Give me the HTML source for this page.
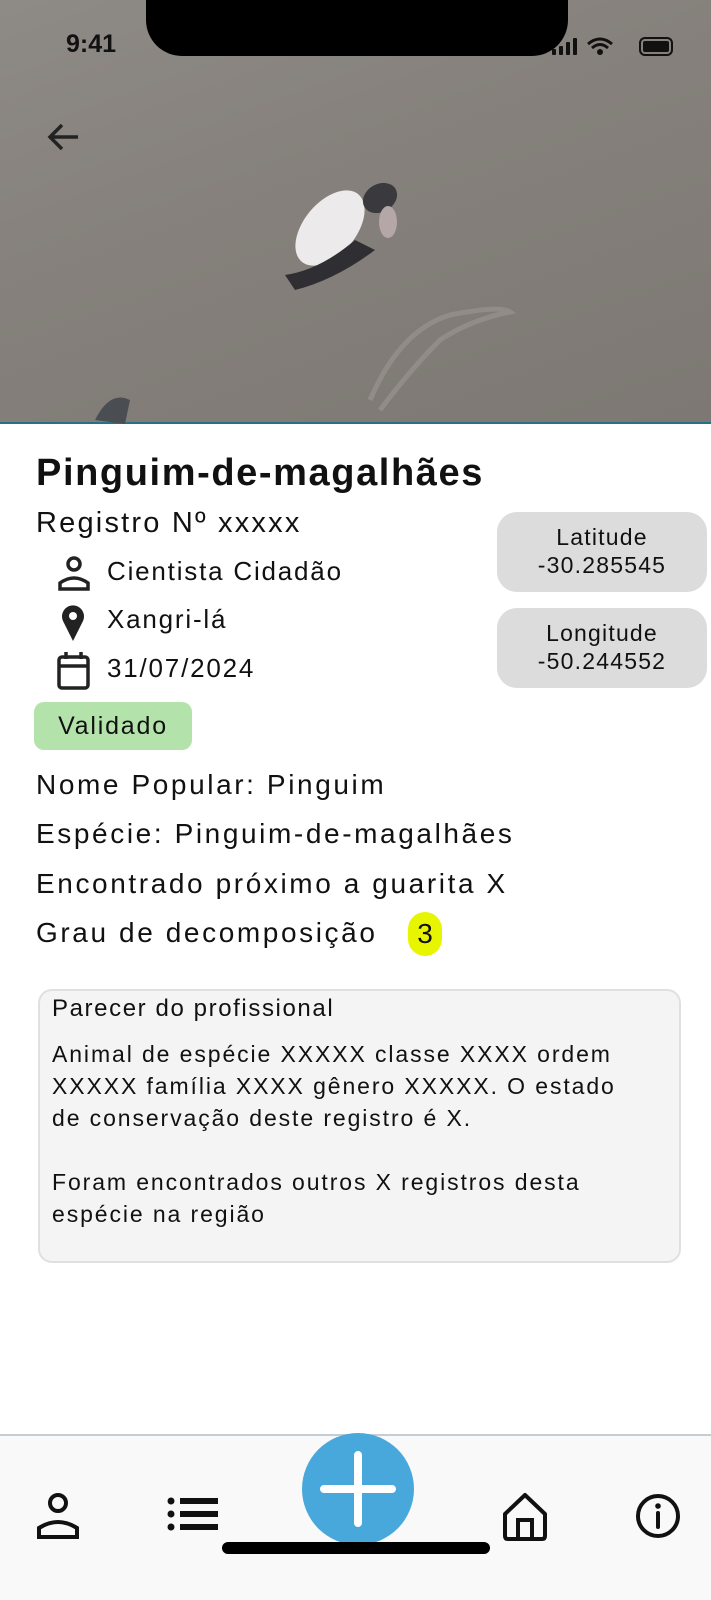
<!DOCTYPE html>
<html><head><meta charset="utf-8"><style>
*{margin:0;padding:0;box-sizing:border-box}
body{width:711px;height:1600px;position:relative;background:#fff;font-family:"Liberation Sans",sans-serif;color:#111;overflow:hidden}
.a{position:absolute}
.photo{left:0;top:0;width:711px;height:424px;background:linear-gradient(160deg,#8e8a86 0%,#86817c 40%,#7d7873 100%);border-bottom:2px solid #2a6f86}
.t{white-space:nowrap}
.box{background:#dcdcdc;border-radius:20px;text-align:center;font-size:23px;line-height:28px;padding-top:11px;letter-spacing:1.2px}
.ln{font-size:28px;line-height:34px;letter-spacing:2.6px}
</style></head><body>
<div class="a photo">
<svg width="711" height="424" class="a" style="left:0;top:0">
<path d="M370 400 Q400 330 450 315 Q500 305 510 312 Q470 320 440 340 Q410 370 380 410" stroke="#9d9892" stroke-width="5" fill="none" opacity=".6"/>
<ellipse cx="330" cy="228" rx="44" ry="26" transform="rotate(-50 330 228)" fill="#eceaea"/>
<ellipse cx="380" cy="198" rx="18" ry="14" transform="rotate(-30 380 198)" fill="#3a3a3e"/>
<path d="M285 275 Q320 270 355 240 L375 250 Q335 280 295 290 Z" fill="#2e2e33"/>
<ellipse cx="388" cy="222" rx="9" ry="16" fill="#b5a6a8"/>
<path d="M95 420 Q110 390 130 400 L125 424 Z" fill="#4a4e52"/>
</svg>
<div class="a t" style="left:66px;top:30px;font-size:25px;font-weight:bold;color:#111">9:41</div>
<div class="a" style="left:146px;top:-2px;width:422px;height:58px;background:#000;border-radius:0 0 36px 36px"></div>
<svg class="a" style="left:552px;top:36px" width="135" height="22"><g fill="#111"><rect x="0" y="13" width="4" height="6" rx="1"/><rect x="7" y="10" width="4" height="9" rx="1"/><rect x="14" y="6" width="4" height="13" rx="1"/><rect x="21" y="2" width="4" height="17" rx="1"/></g>
<path d="M36 8 Q48 -2 60 8 M40 12 Q48 5 56 12" stroke="#111" stroke-width="3" fill="none"/><circle cx="48" cy="16" r="3" fill="#111"/>
<rect x="88" y="2" width="32" height="17" rx="5" fill="none" stroke="#111" stroke-width="2"/><rect x="91" y="5" width="26" height="11" rx="2" fill="#111"/></svg>
<svg class="a" style="left:44px;top:120px" width="40" height="34"><path d="M34 17 H6 M18 5 L6 17 L18 29" stroke="#222" stroke-width="3.5" fill="none"/></svg>
</div>
<div class="a t" style="left:36px;top:452px;font-size:38px;font-weight:bold;letter-spacing:1.6px">Pinguim-de-magalhães</div>
<div class="a t" style="left:36px;top:507px;font-size:29px;letter-spacing:2.2px">Registro Nº xxxxx</div>
<svg class="a" style="left:56px;top:555px" width="36" height="36"><circle cx="18" cy="9" r="6" fill="none" stroke="#222" stroke-width="3.5"/><path d="M4 34 V28 Q18 18 32 28 V34 Z" fill="none" stroke="#222" stroke-width="3.5"/></svg>
<div class="a t" style="left:107px;top:556px;font-size:26px;letter-spacing:1.8px">Cientista Cidadão</div>
<svg class="a" style="left:60px;top:603px" width="30" height="40"><path d="M13 38 L3 18 A11 11 0 1 1 23 18 Z" fill="#222"/><circle cx="13" cy="13" r="4" fill="#fff"/></svg>
<div class="a t" style="left:107px;top:604px;font-size:26px;letter-spacing:1.8px">Xangri-lá</div>
<svg class="a" style="left:56px;top:650px" width="36" height="40"><rect x="3" y="7" width="29" height="31" rx="3" fill="none" stroke="#222" stroke-width="3.5"/><path d="M3 16 H32 M10 2 V9 M25 2 V9" stroke="#222" stroke-width="3.5"/></svg>
<div class="a t" style="left:107px;top:653px;font-size:26px;letter-spacing:1.8px">31/07/2024</div>
<div class="a box" style="left:497px;top:512px;width:210px;height:80px">Latitude<br>-30.285545</div>
<div class="a box" style="left:497px;top:608px;width:210px;height:80px">Longitude<br>-50.244552</div>
<div class="a t" style="left:34px;top:702px;width:158px;height:48px;background:#b3e3ab;border-radius:10px;font-size:25px;line-height:48px;text-align:center;letter-spacing:1.8px">Validado</div>
<div class="a t ln" style="left:36px;top:768px">Nome Popular: Pinguim</div>
<div class="a t ln" style="left:36px;top:817px">Espécie: Pinguim-de-magalhães</div>
<div class="a t ln" style="left:36px;top:867px">Encontrado próximo a guarita X</div>
<div class="a t ln" style="left:36px;top:916px">Grau de decomposição</div>
<div class="a t" style="left:408px;top:912px;width:34px;height:44px;background:#e8f500;border-radius:17px;font-size:28px;line-height:44px;text-align:center">3</div>
<div class="a" style="left:38px;top:989px;width:643px;height:274px;background:#f4f4f4;border:2px solid #e0e0e0;border-radius:14px"></div>
<div class="a t" style="left:52px;top:995px;font-size:24px;letter-spacing:1.6px">Parecer do profissional</div>
<div class="a" style="left:52px;top:1038px;width:640px;font-size:23px;line-height:32px;letter-spacing:1.9px;white-space:nowrap">Animal de espécie XXXXX classe XXXX ordem<br>XXXXX família XXXX gênero XXXXX. O estado<br>de conservação deste registro é X.<br><br>Foram encontrados outros X registros desta<br>espécie na região</div>
<div class="a" style="left:0;top:1434px;width:711px;height:166px;background:#f9f9f9;border-top:2px solid #c4ccd4"></div>
<svg class="a" style="left:36px;top:1490px" width="50" height="50"><circle cx="22" cy="13" r="8" fill="none" stroke="#111" stroke-width="4"/><path d="M3 47 V38 Q22 26 41 38 V47 Z" fill="none" stroke="#111" stroke-width="4"/></svg>
<svg class="a" style="left:166px;top:1495px" width="56" height="40"><g fill="#111"><circle cx="5" cy="6" r="3.5"/><circle cx="5" cy="19" r="3.5"/><circle cx="5" cy="32" r="3.5"/><rect x="14" y="3" width="38" height="6"/><rect x="14" y="16" width="38" height="6"/><rect x="14" y="29" width="38" height="6"/></g></svg>
<div class="a" style="left:302px;top:1433px;width:112px;height:112px;border-radius:50%;background:#49a8db"></div>
<svg class="a" style="left:302px;top:1433px" width="112" height="112"><path d="M56 22 V90 M22 56 H90" stroke="#fff" stroke-width="8" stroke-linecap="round"/></svg>
<svg class="a" style="left:502px;top:1492px" width="46" height="50"><path d="M3 22 L23 3 L43 22 V44 Q43 47 40 47 H6 Q3 47 3 44 Z" fill="none" stroke="#111" stroke-width="4" stroke-linejoin="round"/><path d="M16 47 V28 H30 V47" fill="none" stroke="#111" stroke-width="4"/></svg>
<svg class="a" style="left:634px;top:1492px" width="48" height="48"><circle cx="24" cy="24" r="20" fill="none" stroke="#111" stroke-width="4"/><circle cx="24" cy="14" r="2.8" fill="#111"/><path d="M24 21 V35" stroke="#111" stroke-width="4" stroke-linecap="round"/></svg>
<div class="a" style="left:222px;top:1542px;width:268px;height:12px;background:#000;border-radius:6px"></div>
</body></html>
